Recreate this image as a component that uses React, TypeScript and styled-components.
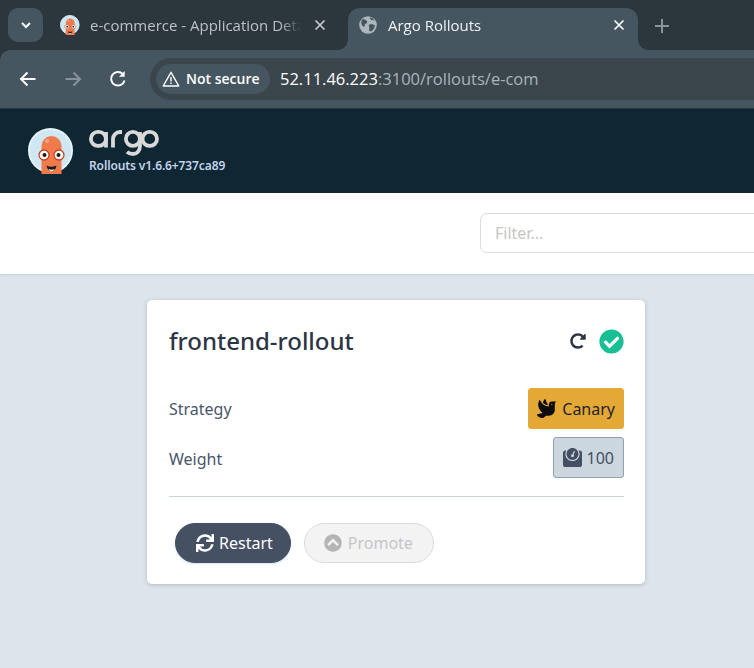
import React from "react";
import styled, { createGlobalStyle } from "styled-components";
import { FaDove, FaWeight, FaCheckCircle, FaSync, FaChevronCircleUp, FaRedoAlt } from "react-icons/fa";

const Global = createGlobalStyle`
  html, body { margin: 0; padding: 0; background: #dee4eb; overflow: hidden; }
  body { width: 754px; height: 668px; font-family: "Noto Sans", "Open Sans", sans-serif; }
  * { box-sizing: border-box; }
`;

const Page = styled.div`
  display: flex;
  flex-direction: column;
  width: 754px;
  height: 668px;
  overflow: hidden;
  background: #dee4eb;
`;

const BrowserChrome = styled.div`
  background: #2c363d;
  flex: none;
`;

const TabStrip = styled.div`
  display: flex;
  align-items: flex-end;
  height: 50px;
  padding-left: 8px;
`;

const TabMenu = styled.div`
  display: flex;
  align-items: center;
  justify-content: center;
  width: 35px;
  height: 34px;
  margin-bottom: 8px;
  border-radius: 10px;
  background: #455660;
  color: #fff;
`;

const InactiveTab = styled.div`
  display: flex;
  align-items: center;
  width: 305px;
  height: 42px;
  padding: 0 0 8px 17px;
  font-family: "Open Sans", sans-serif;
  font-size: 15px;
  color: #bcc2c6;
  white-space: nowrap;
`;

const TabTitle = styled.span<{ $w: number; $left: number }>`
  width: ${(p) => p.$w}px;
  margin-left: ${(p) => p.$left}px;
  overflow: hidden;
  mask-image: linear-gradient(to right, #000 90%, transparent 100%);
`;

const ActiveTab = styled.div`
  position: relative;
  display: flex;
  align-items: center;
  width: 290px;
  height: 42px;
  padding: 0 0 8px 11px;
  border-radius: 12px 12px 0 0;
  background: #455660;
  font-family: "Open Sans", sans-serif;
  font-size: 15px;
  color: #eef1f2;
  white-space: nowrap;
  &::before, &::after {
    content: "";
    position: absolute;
    bottom: 0;
    width: 10px;
    height: 10px;
    background: radial-gradient(circle at var(--c) 0, #2c363d 9.5px, #455660 10px);
  }
  &::before { left: -10px; --c: 0; }
  &::after { right: -10px; --c: 100%; }
`;

const CloseSlot = styled.span<{ $left: number }>`
  display: flex;
  margin-left: ${(p) => p.$left}px;
`;

const NewTab = styled.div`
  display: flex;
  margin: 0 0 17px 17px;
  color: #8a959b;
`;

const Toolbar = styled.div`
  display: flex;
  align-items: center;
  height: 59px;
  padding: 0 0 1px 19px;
  border-top-left-radius: 10px;
  border-bottom: 1px solid #2c363d;
  background: #455660;
`;

const NavIcon = styled.span<{ $gap: number }>`
  display: flex;
  width: 18px;
  margin-right: ${(p) => p.$gap}px;
`;

const Omnibox = styled.div`
  display: flex;
  align-items: center;
  flex: 1;
  height: 42px;
  margin-left: -1px;
  padding-left: 6px;
  border-radius: 21px 0 0 21px;
  background: #3a454c;
`;

const SecurityChip = styled.div`
  display: flex;
  align-items: center;
  gap: 6px;
  width: 114px;
  height: 30px;
  padding-left: 6px;
  border-radius: 15px;
  background: #455660;
  font-family: "Open Sans", sans-serif;
  font-size: 14px;
  font-weight: 600;
  color: #fff;
  white-space: nowrap;
`;

const Url = styled.div`
  margin-left: 10px;
  font-family: "Open Sans", sans-serif;
  font-size: 16.5px;
  color: #fff;
  white-space: nowrap;
  span { color: #a9b4bb; }
`;

const AppHeader = styled.header`
  display: flex;
  align-items: center;
  height: 84px;
  padding-left: 28px;
  background: #0f2733;
  flex: none;
`;

const Brand = styled.div`
  display: flex;
  flex-direction: column;
  margin-left: 15px;
`;

const Version = styled.div`
  font-size: 12px;
  line-height: 14px;
  font-weight: 600;
  letter-spacing: -0.12px;
  color: #c5d4ee;
  white-space: nowrap;
`;

const FilterBar = styled.div`
  display: flex;
  align-items: center;
  height: 81px;
  padding: 0 0 1px 480px;
  background: #fff;
  box-shadow: 0 1px 2px rgba(100, 120, 140, 0.18);
  flex: none;
`;

const FilterInput = styled.div`
  width: 300px;
  height: 40px;
  flex: none;
  padding-left: 14px;
  border: 1px solid #dcdcdc;
  border-radius: 7px;
  font-size: 16px;
  line-height: 38px;
  color: #c6c6c6;
`;

const Content = styled.main`
  display: flex;
  justify-content: center;
  flex: 1;
  padding: 26px 0 0 38px;
`;

const Card = styled.section`
  display: flex;
  flex-direction: column;
  width: 498px;
  height: 284px;
  padding: 20px 21px 0 22px;
  border-radius: 5px;
  background: #fff;
  box-shadow: 0 1px 4px rgba(90, 110, 130, 0.35);
`;

const CardHead = styled.div`
  display: flex;
  align-items: center;
  justify-content: space-between;
  height: 42px;
  margin-bottom: 26px;
`;

const Title = styled.h1`
  margin: 0;
  padding-bottom: 2px;
  font-size: 24px;
  font-weight: 500;
  color: #2d3544;
`;

const StatusIcons = styled.div`
  display: flex;
  align-items: center;
  gap: 13px;
  color: #2d3544;
`;

const HealthyIcon = styled(FaCheckCircle)`
  color: #18be94;
`;

const Row = styled.div`
  display: flex;
  align-items: center;
  justify-content: space-between;
  height: 41px;
  margin-bottom: 8px;
  font-size: 16px;
  color: #49566a;
`;

const RowLabel = styled.span<{ $nudge?: boolean }>`
  padding-top: ${(p) => (p.$nudge ? 2 : 0)}px;
`;

const Pill = styled.div<{ $bg: string; $fg: string; $border: string; $gap: number; $pad: number }>`
  display: flex;
  align-items: center;
  gap: ${(p) => p.$gap}px;
  height: 41px;
  padding: 0 ${(p) => p.$pad}px;
  border: 1px solid ${(p) => p.$border};
  border-radius: 3px;
  background: ${(p) => p.$bg};
  color: ${(p) => p.$fg};
  font-size: 16px;
`;

const DoveIcon = styled(FaDove)`
  color: #0d0d10;
`;

const Divider = styled.hr`
  width: 100%;
  margin: 10px 0 26px;
  border: 0;
  border-top: 1px solid #c8d4df;
`;

const Actions = styled.div`
  display: flex;
  gap: 13px;
  padding-left: 6px;
`;

const ActionButton = styled.div<{ $primary?: boolean }>`
  display: flex;
  align-items: center;
  gap: ${(p) => (p.$primary ? 5 : 6)}px;
  height: 40px;
  padding: 0 ${(p) => (p.$primary ? 17 : 20)}px 0 ${(p) => (p.$primary ? 20 : 19)}px;
  border-radius: 20px;
  border: 1px solid ${(p) => (p.$primary ? "#455062" : "#dcdcdc")};
  background: ${(p) => (p.$primary ? "#455062" : "#f3f3f3")};
  color: ${(p) => (p.$primary ? "#fff" : "#c6c6c6")};
  box-shadow: ${(p) => (p.$primary ? "0 1px 2px rgba(150, 200, 240, 0.45)" : "none")};
  font-size: 16px;
`;

const PromoteIcon = styled(FaChevronCircleUp)`
  color: #b4b4b4;
`;

const Close = ({ c }: { c: string }) => (
  <svg width="12" height="12" viewBox="0 0 12 12" fill="none" stroke={c} strokeWidth="1.7">
    <path d="M1.5 1.5l9 9M10.5 1.5l-9 9" />
  </svg>
);

const Mascot = ({ size }: { size: number }) => (
  <svg width={size} height={size} viewBox="0 0 46 46">
    <circle cx="22.500" cy="22.500" r="21.500" fill="#cfe6f3" stroke="#e6f2fa" strokeWidth="2" />
    <path d="M13.500 46V18a10 10 0 0 1 20 0v28z" fill="#ef7b4d" />
    <circle cx="19" cy="13" r="2" fill="#f5a283" />
    <circle cx="16" cy="27" r="5" fill="#fff" stroke="#c9431f" strokeWidth="1.300" />
    <circle cx="31" cy="27" r="5" fill="#fff" stroke="#c9431f" strokeWidth="1.300" />
    <circle cx="16.500" cy="27" r="2" fill="#1a1a1a" />
    <circle cx="30.500" cy="27" r="2" fill="#1a1a1a" />
    <path d="M18.500 37.500c3 1.600 6.500 1.600 10 0-.6 3.600-2.400 5.500-5 5.500s-4.400-1.900-5-5.500z" fill="#1d1d1d" />
    <path d="M20.500 41c2 .9 4 .9 6 0l-1.400 2h-3.200z" fill="#f4f4f4" />
  </svg>
);

const Globe = () => (
  <svg width="18" height="18" viewBox="0 0 18 18">
    <circle cx="9" cy="9" r="8.800" fill="#aeb6bb" />
    <path d="M3 3.500c2.200-.6 3.400.2 4.600 1.300 1 .9.800 2.400-.4 2.800-1 .3-1.700 1-1.400 2.200.2 1-1 1.200-1.900.5C2.700 9 1.500 7 3 3.500zM10.500 8.500c1.700-.6 4-.3 5.500 1-.3 2.500-1.800 5-4.300 6-1.700-.4-2-1.700-1.400-3 .5-1-1.500-3.300.2-4z" fill="#455660" />
    <path d="M11 1.200c1.800.5 3.200 1.400 4.200 2.800-1.400.6-3 .3-3.700-.8-.4-.6-.6-1.300-.5-2z" fill="#455660" />
  </svg>
);

const ArgoLogo = () => (
  <svg width="70" height="30" viewBox="0 0 70 30" fill="none" stroke="#d9d9d9" strokeWidth="3.800" aria-label="argo">
    <rect x="1.900" y="2.900" width="15" height="14" rx="7" />
    <path d="M17 3v15.500" />
    <path d="M24 18.500v-8.500a7 7 0 0 1 7-7h2" />
    <rect x="36.900" y="2.900" width="14" height="14" rx="7" />
    <path d="M51 3v13.500c0 5.500-3 8.500-7 8.500-2.500 0-4.500-.8-6-2.200" />
    <rect x="53.500" y="2.900" width="14.500" height="14" rx="7" />
  </svg>
);

export default function App() {
  return (
    <Page>
      <Global />
      <BrowserChrome>
        <TabStrip>
          <TabMenu>
            <svg width="12" height="12" viewBox="0 0 12 12" fill="none" stroke="#fff" strokeWidth="2">
              <path d="M2 4l4 4 4-4" />
            </svg>
          </TabMenu>
          <InactiveTab>
            <Mascot size={20} />
            <TabTitle $w={211} $left={10}>e-commerce - Application Details</TabTitle>
            <CloseSlot $left={13}>
              <Close c="#c8cdd0" />
            </CloseSlot>
          </InactiveTab>
          <ActiveTab>
            <Globe />
            <TabTitle $w={207} $left={11}>Argo Rollouts</TabTitle>
            <CloseSlot $left={18}>
              <Close c="#fff" />
            </CloseSlot>
          </ActiveTab>
          <NewTab>
            <svg width="14" height="14" viewBox="0 0 14 14" stroke="currentColor" strokeWidth="2">
              <path d="M7 0v14M0 7h14" />
            </svg>
          </NewTab>
        </TabStrip>
        <Toolbar>
          <NavIcon $gap={27}>
            <svg width="18" height="16" viewBox="0 0 18 16" fill="none" stroke="#fff" strokeWidth="2">
              <path d="M16.500 8H2M8.500 1.500L2 8l6.500 6.500" />
            </svg>
          </NavIcon>
          <NavIcon $gap={27}>
            <svg width="18" height="16" viewBox="0 0 18 16" fill="none" stroke="#87939a" strokeWidth="2">
              <path d="M1.500 8H16M9.500 1.500L16 8l-6.500 6.500" />
            </svg>
          </NavIcon>
          <NavIcon $gap={24}>
            <svg width="18" height="18" viewBox="0 0 18 18" fill="none" stroke="#fff" strokeWidth="2">
              <path d="M15.500 10.500A6.800 6.800 0 1 1 13.800 4" />
              <path d="M15.700 1v5.800H10" fill="#fff" stroke="none" />
            </svg>
          </NavIcon>
          <Omnibox>
            <SecurityChip>
              <svg width="18" height="16" viewBox="0 0 18 16" fill="none" stroke="#fff" strokeWidth="1.400">
                <path d="M9 1.300L1.200 15h15.600z" strokeLinejoin="round" />
                <path d="M9 6v4.500M9 11.500v1.600" />
              </svg>
              Not secure
            </SecurityChip>
            <Url>
              52.11.46.223<span>:3100/rollouts/e-com</span>
            </Url>
          </Omnibox>
        </Toolbar>
      </BrowserChrome>
      <AppHeader>
        <Mascot size={46} />
        <Brand>
          <ArgoLogo />
          <Version>Rollouts v1.6.6+737ca89</Version>
        </Brand>
      </AppHeader>
      <FilterBar>
        <FilterInput>Filter...</FilterInput>
      </FilterBar>
      <Content>
        <Card>
          <CardHead>
            <Title>frontend-rollout</Title>
            <StatusIcons>
              <FaRedoAlt size={16} />
              <HealthyIcon size={25} />
            </StatusIcons>
          </CardHead>
          <Row>
            <RowLabel>Strategy</RowLabel>
            <Pill $bg="#e4a835" $fg="#1d2430" $border="#e4a835" $gap={6} $pad={8}>
              <DoveIcon size={19} />
              Canary
            </Pill>
          </Row>
          <Row>
            <RowLabel $nudge>Weight</RowLabel>
            <Pill $bg="#ccd6df" $fg="#434f62" $border="#8fa0ae" $gap={5} $pad={9}>
              <FaWeight size={19} />
              100
            </Pill>
          </Row>
          <Divider />
          <Actions>
            <ActionButton $primary>
              <FaSync size={18} />
              Restart
            </ActionButton>
            <ActionButton>
              <PromoteIcon size={18} />
              Promote
            </ActionButton>
          </Actions>
        </Card>
      </Content>
    </Page>
  );
}
